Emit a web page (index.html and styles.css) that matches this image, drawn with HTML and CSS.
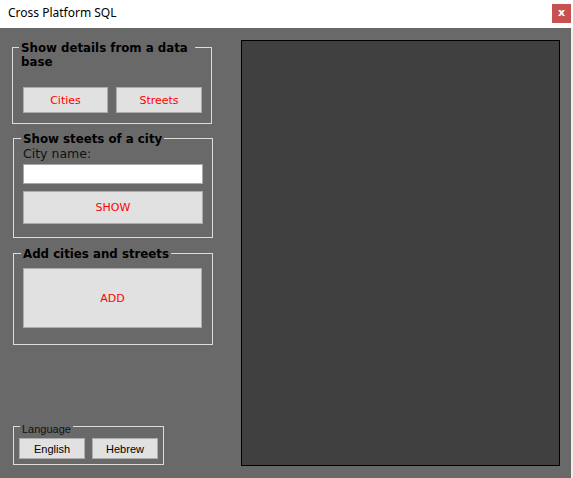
FILE: index.html
```html
<!DOCTYPE html>
<html>
<head>
<meta charset="utf-8">
<title>Cross Platform SQL</title>
<link rel="stylesheet" href="styles.css">
</head>
<body>
<div class="window">
  <div class="titlebar">
    <span class="title">Cross Platform SQL</span>
    <span class="close">x</span>
  </div>
  <div class="main">
    <div class="left">
      <div class="group g1">
        <div class="gtitle t1">Show details from a data base</div>
        <div class="row r1">
          <button class="btn b-cities">Cities</button>
          <button class="btn b-streets">Streets</button>
        </div>
      </div>
      <div class="group g2">
        <div class="gtitle t2">Show steets of a city</div>
        <div class="label">City name:</div>
        <input class="textbox" type="text">
        <button class="btn b-show">SHOW</button>
      </div>
      <div class="group g3">
        <div class="gtitle t3">Add cities and streets</div>
        <button class="btn b-add">ADD</button>
      </div>
      <div class="group lang">
        <div class="ltitle">Language</div>
        <div class="row r2">
          <button class="lbtn">English</button>
          <button class="lbtn">Hebrew</button>
        </div>
      </div>
    </div>
    <div class="panel"></div>
  </div>
</div>
</body>
</html>
```
FILE: styles.css
```css
* { box-sizing: border-box; }
html, body { margin: 0; padding: 0; }
body { width: 573px; height: 478px; overflow: hidden; background: #fff; }

.window { width: 573px; height: 478px; display: flex; flex-direction: column; }

.titlebar {
  height: 28px;
  background: #fff;
  display: flex;
  align-items: flex-start;
  flex: none;
}
.title {
  font-family: "Noto Sans", "Open Sans", sans-serif;
  font-size: 12px;
  line-height: 26px;
  color: #000;
  padding-left: 8px;
}
.close {
  margin-left: auto;
  margin-top: 4px;
  margin-right: 2px;
  width: 19px;
  height: 19px;
  background: #c75050;
  color: #fff;
  font-family: "DejaVu Sans", sans-serif;
  font-weight: bold;
  font-size: 11px;
  line-height: 17px;
  text-align: center;
}

.main {
  flex: 1;
  background: #696969;
  border-right: 2px solid #eeeeee;
  display: flex;
}

.left {
  width: 241px;
  flex: none;
  display: flex;
  flex-direction: column;
  padding-top: 19px;
  padding-bottom: 13px;
}

.group {
  border: 1px solid #dcdcdc;
  width: 200px;
  margin-left: 13px;
  padding-left: 9px;
}
.g1 { height: 77px; margin-left: 12px; padding-left: 10px; }
.g2 { height: 100px; margin-top: 14px; }
.g3 { height: 92px; margin-top: 15px; }
.lang { width: 151px; height: 39px; margin-top: auto; padding-left: 5px; }

.gtitle {
  display: block;
  width: fit-content;
  background: #696969;
  font-family: "DejaVu Sans", Verdana, sans-serif;
  font-weight: bold;
  font-size: 11.8px;
  line-height: 14px;
  color: #000;
  margin-top: -7px;
  padding: 0 2px;
}
.t1 { margin-left: -4px; max-width: 176px; }
.t2 { margin-left: -2px; }
.t3 { margin-left: -2px; }

.row { display: flex; }
.r1 { margin-top: 18px; gap: 8px; }

.btn {
  display: block;
  margin: 0;
  padding: 0;
  background: #e1e1e1;
  border: 1px solid #adadad;
  color: #ff0000;
  font-family: "DejaVu Sans", Verdana, sans-serif;
  font-size: 11px;
}
.b-cities { width: 85px; height: 26px; }
.b-streets { width: 86px; height: 26px; }

.label {
  font-family: "DejaVu Sans", Verdana, sans-serif;
  font-size: 12.5px;
  line-height: 15px;
  color: #111;
}
.textbox {
  display: block;
  margin: 3px 0 0 0;
  width: 180px;
  height: 20px;
  border: 1px solid #a9a9a9;
  background: #fff;
  padding: 0;
}
.b-show { width: 180px; height: 33px; margin-top: 7px; }
.b-add { width: 179px; height: 60px; margin-top: 7px; }

.ltitle {
  display: block;
  width: fit-content;
  background: #696969;
  font-family: "Liberation Sans", Arial, sans-serif;
  font-size: 11px;
  line-height: 13px;
  color: #111;
  margin-top: -4px;
  margin-left: 1px;
  padding: 0 2px 0 2px;
}
.r2 { margin-top: 2px; gap: 7px; }
.lbtn {
  display: block;
  margin: 0;
  padding: 0;
  width: 66px;
  height: 21px;
  background: #e1e1e1;
  border: 1px solid #adadad;
  color: #000;
  font-family: "Liberation Sans", Arial, sans-serif;
  font-size: 11px;
}

.panel {
  flex: none;
  width: 319px;
  height: 426px;
  margin-top: 12px;
  border: 1px solid #000;
  background: #404040;
}
```
